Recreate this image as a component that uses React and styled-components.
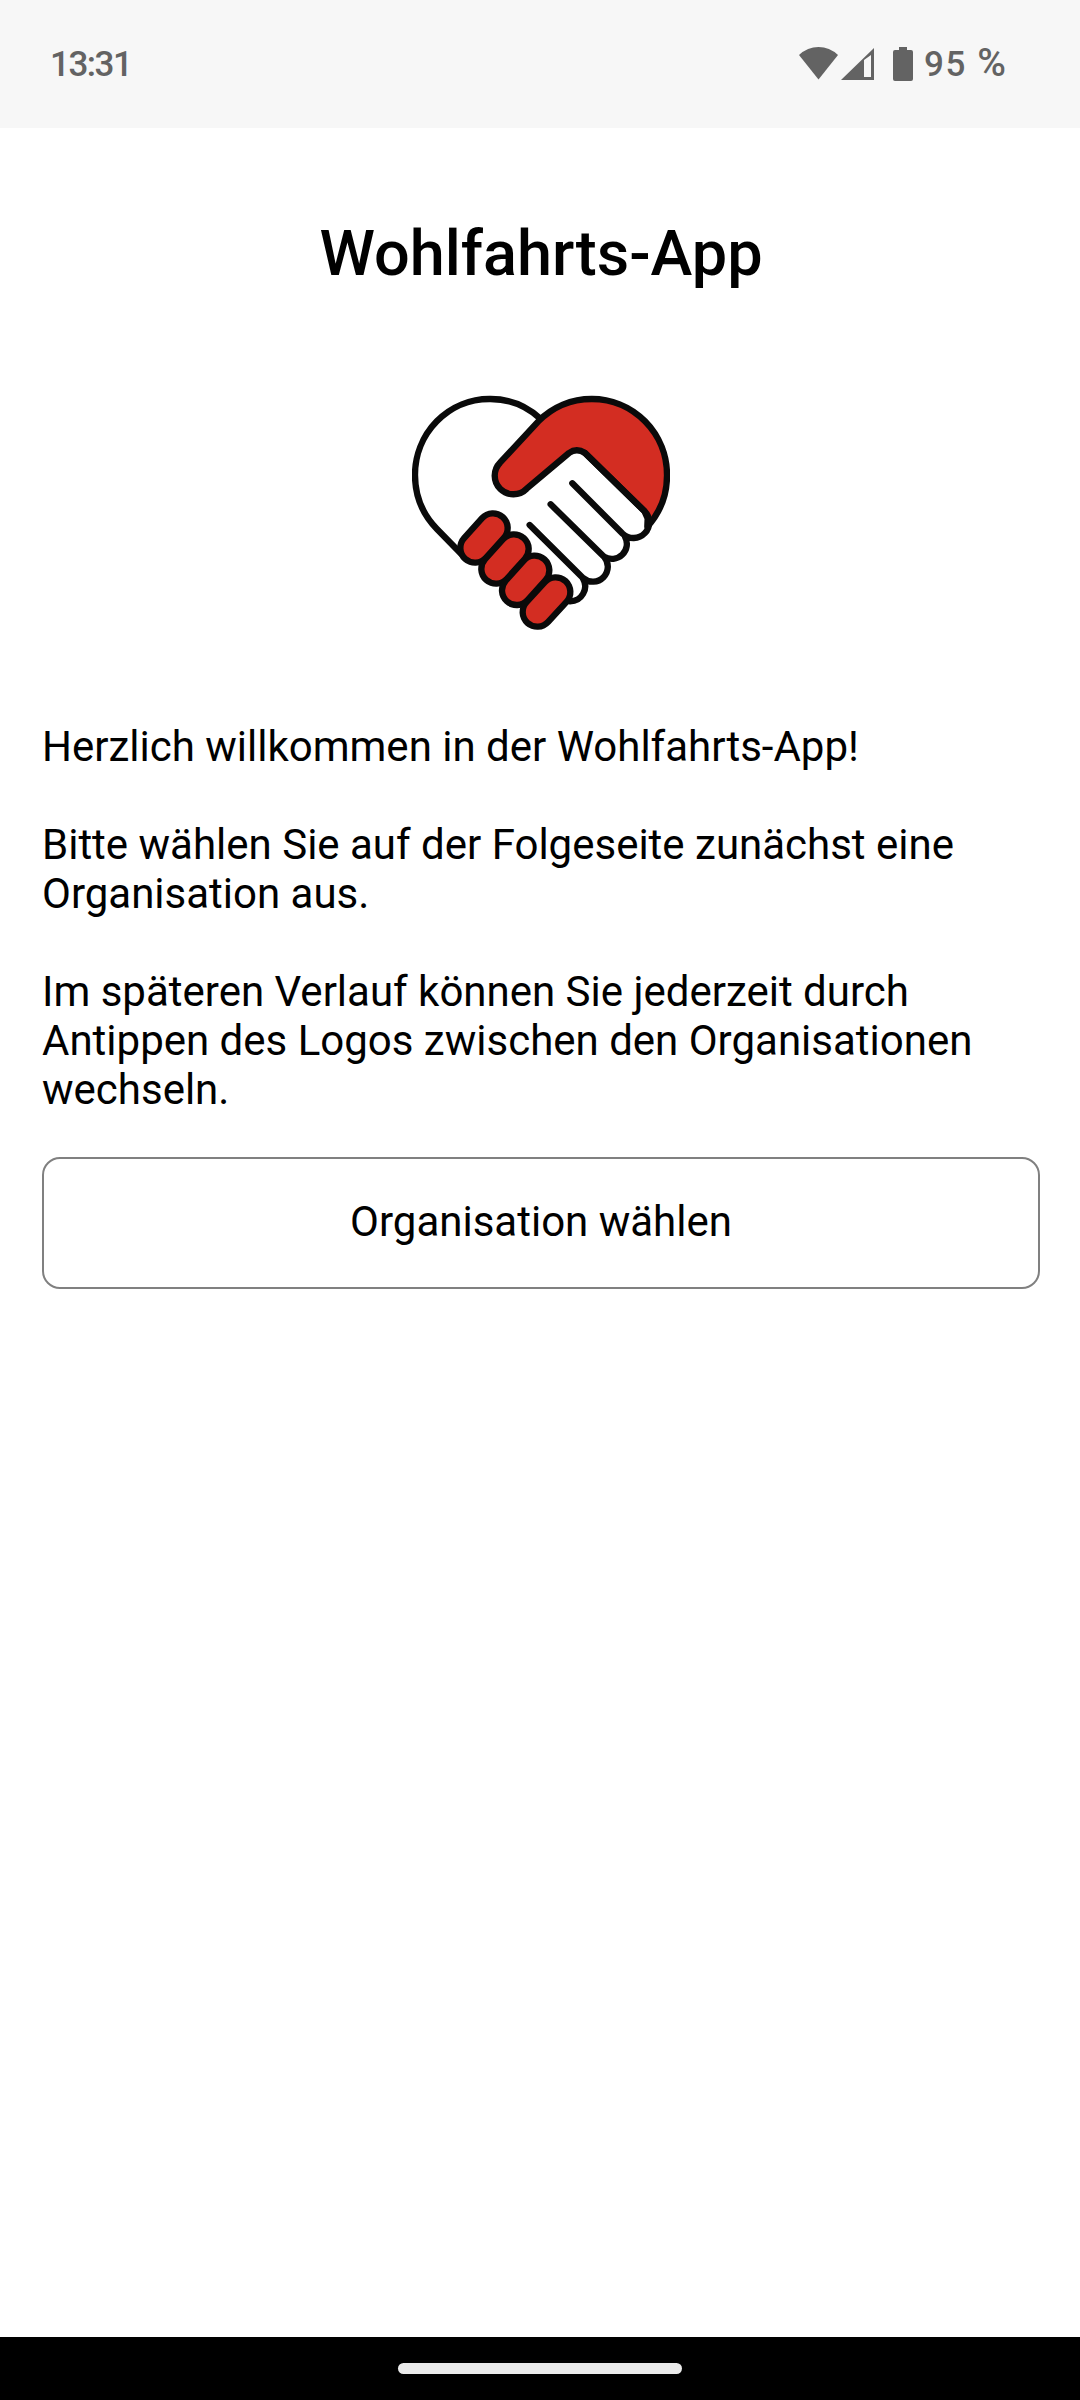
import React from "react";
import styled, { createGlobalStyle } from "styled-components";

const GlobalStyle = createGlobalStyle`
  body {
    margin: 0;
    background: #fff;
    font-family: Roboto, "Noto Sans", sans-serif;
    color: #000;
  }
`;

const Screen = styled.div`
  display: flex;
  flex-direction: column;
  width: 1080px;
  height: 2400px;
  box-sizing: border-box;
  background: #fff;
`;

const StatusBar = styled.header`
  display: flex;
  justify-content: space-between;
  height: 128px;
  box-sizing: border-box;
  padding: 43px 74px 0 50px;
  background: #f7f7f7;
  color: #636363;
`;

const StatusText = styled.span`
  font-size: 35px;
  line-height: 44px;
  font-weight: 500;
  letter-spacing: ${(props) => props.$spacing || "0"};
  white-space: pre;
`;

const Percent = styled.span`
  font-size: 39px;
  line-height: 1;
  letter-spacing: 0;
`;

const StatusIcons = styled.div`
  display: flex;
  align-items: flex-start;
`;

const IconStrip = styled.svg`
  display: block;
  margin-right: 9px;
`;

const Content = styled.main`
  flex: 1;
  display: flex;
  flex-direction: column;
  padding: 89px 40px 0 42px;
`;

const Title = styled.h1`
  margin: 0;
  font-size: 63px;
  line-height: 74px;
  font-weight: 500;
  text-align: center;
`;

const Logo = styled.svg`
  display: block;
  align-self: center;
  margin: 89px 0 82px;
`;

const Paragraph = styled.p`
  margin: 0 0 49px;
  font-size: 42px;
  line-height: 49px;
`;

const SelectButton = styled.button`
  height: 132px;
  margin-top: -6px;
  padding: 0 0 3px;
  border: 2px solid #808080;
  border-radius: 18px;
  background: #fff;
  color: #000;
  font-family: inherit;
  font-size: 42px;
  line-height: 49px;
`;

const NavBar = styled.footer`
  display: flex;
  justify-content: center;
  height: 63px;
  box-sizing: border-box;
  padding-top: 26px;
  background: #000;
`;

const NavHandle = styled.div`
  width: 284px;
  height: 11px;
  border-radius: 6px;
  background: #ebebeb;
`;

// the four red fingers, stepping down the diagonal
const fingers = [
  "M225 504L279 444",
  "M288 567L342 507",
  "M350 631L404 571",
  "M412 696L467 636",
];

const HandshakeLogo = () => (
  <Logo width="258" height="260" viewBox="36 0 774 780">
    <g
      fill="none"
      stroke="#0a0a0a"
      strokeWidth="19"
      strokeLinecap="round"
      strokeLinejoin="round"
    >
      <path d="M184 522L110 446A223 228 0 0 1 45 285A223 228 0 0 1 268 57A223 228 0 0 1 420 115" />
      <path
        d="M415 124A226 228 0 0 1 576 57A225 228 0 0 1 801 285A225 228 0 0 1 742 440L743 415L733 393L555 219Q530 203 507 219L380 326A55 55 0 0 1 300 248Z"
        fill="#d32d22"
      />
      <path
        d="M555 219L733 393A47 47 0 0 1 668 461L517 310M675 470A45 45 0 0 1 612 530L452 373M612 530A45 45 0 0 1 549 594L389 435M549 596A45 45 0 0 1 510 664"
      />
    </g>
    <g stroke="#0a0a0a" strokeWidth="107" strokeLinecap="round">
      {fingers.map((d) => (
        <path key={d} d={d} />
      ))}
    </g>
    <g stroke="#d32d22" strokeWidth="69" strokeLinecap="round">
      {fingers.map((d) => (
        <path key={d} d={d} />
      ))}
    </g>
  </Logo>
);

const StatusSymbols = () => (
  <IconStrip width="116" height="40" viewBox="0 0 116 40" fill="#636363">
    <path d="M0 12Q8.500 4 19.500 4T39 12L19.500 36.500Z" />
    <path
      d="M42 37L75 5V37ZM65 17V34H72V12Z"
      fillRule="evenodd"
    />
    <path d="M100 4h8v3h4q2 0 2 2v27q0 2-2 2h-16q-2 0-2-2v-27q0-2 2-2h4z" />
  </IconStrip>
);

const App = () => {
  return (
    <Screen>
      <GlobalStyle />
      <StatusBar>
        <StatusText $spacing="-1.5px">13:31</StatusText>
        <StatusIcons>
          <StatusSymbols />
          <StatusText $spacing="1.6px">
            95 <Percent>%</Percent>
          </StatusText>
        </StatusIcons>
      </StatusBar>
      <Content>
        <Title>Wohlfahrts-App</Title>
        <HandshakeLogo />
        <Paragraph>Herzlich willkommen in der Wohlfahrts-App!</Paragraph>
        <Paragraph>
          Bitte wählen Sie auf der Folgeseite zunächst eine Organisation aus.
        </Paragraph>
        <Paragraph>
          Im späteren Verlauf können Sie jederzeit durch Antippen des Logos
          zwischen den Organisationen wechseln.
        </Paragraph>
        <SelectButton>Organisation wählen</SelectButton>
      </Content>
      <NavBar>
        <NavHandle />
      </NavBar>
    </Screen>
  );
};

export default App;
